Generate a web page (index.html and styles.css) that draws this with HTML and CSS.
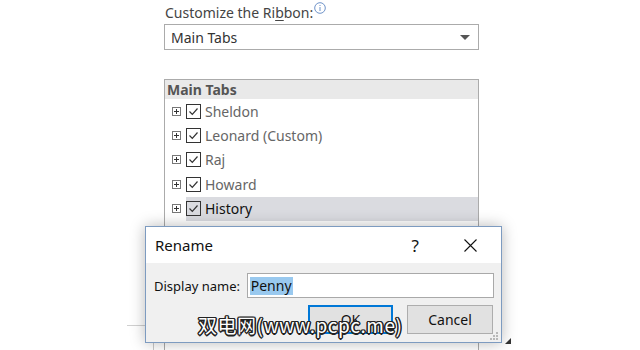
FILE: index.html
```html
<!DOCTYPE html>
<html lang="en">
<head>
    <meta charset="UTF-8">
    <title>Customize the Ribbon</title>
    <link rel="stylesheet" href="styles.css">
</head>
<body>
    <div class="screen">
        <div class="panel">
            <div class="field-label">
                Customize the Ri<u>b</u>bon:<svg class="info-icon" width="12" height="12" viewBox="0 0 12 12"><circle cx="6" cy="6" r="5.3" fill="none" stroke="#6f93c9" stroke-width="1"/><rect x="5.5" y="5" width="1" height="4" fill="#6f93c9"/><rect x="5.5" y="3" width="1" height="1" fill="#6f93c9"/></svg>
            </div>
            <div class="dropdown">
                <span>Main Tabs</span>
                <span class="arrow"></span>
            </div>

            <div class="listbox">
                <div class="list-head">Main Tabs</div>
                <div class="row"><span class="expander"></span><span class="check"></span><span class="row-label">Sheldon</span></div>
                <div class="row"><span class="expander"></span><span class="check"></span><span class="row-label">Leonard (Custom)</span></div>
                <div class="row"><span class="expander"></span><span class="check"></span><span class="row-label">Raj</span></div>
                <div class="row"><span class="expander"></span><span class="check"></span><span class="row-label">Howard</span></div>
                <div class="row selected"><span class="expander"></span><span class="check"></span><span class="row-label">History</span></div>
                <div class="row"><span class="expander"></span><span class="check"></span><span class="row-label">Penny</span></div>
            </div>
        </div>

        <!-- bits of the options window behind the dialog -->
        <div class="back-rule"></div>
        <div class="back-edge"></div>
        <svg class="scroll-tip" width="6" height="6" viewBox="0 0 6 6"><polygon points="6,0 6,6 0,6" fill="#333"/></svg>

        <div class="dialog">
            <div class="dialog-title">
                <span class="dialog-name">Rename</span>
                <span class="help">?</span>
                <svg class="close" width="13" height="13" viewBox="0 0 13 13"><path d="M0.5 0.5 L12.5 12.5 M12.5 0.5 L0.5 12.5" stroke="#111" stroke-width="1.1"/></svg>
            </div>
            <div class="dialog-body">
                <div class="name-row">
                    <span class="name-label">Display name:</span>
                    <div class="name-input"><span class="selection">Penny</span></div>
                </div>
                <div class="button-row">
                    <button class="btn btn-ok">OK</button>
                    <button class="btn">Cancel</button>
                </div>
            </div>
            <svg class="grip" width="10" height="10" viewBox="0 0 10 10">
                <rect x="7" y="1" width="2" height="2" fill="#b8b8b8"/>
                <rect x="4" y="4" width="2" height="2" fill="#b8b8b8"/>
                <rect x="7" y="4" width="2" height="2" fill="#b8b8b8"/>
                <rect x="1" y="7" width="2" height="2" fill="#b8b8b8"/>
                <rect x="4" y="7" width="2" height="2" fill="#b8b8b8"/>
                <rect x="7" y="7" width="2" height="2" fill="#b8b8b8"/>
            </svg>
        </div>

        <div class="watermark">双电网(www.pcpc.me)</div>
    </div>
</body>
</html>
```

FILE: styles.css
```css
body {
    margin: 0;
    background-color: white;
    font-family: "Noto Sans", "Open Sans", sans-serif;
}
.screen {
    position: relative;
    width: 640px;
    height: 350px;
    overflow: hidden;
    background-color: white;
}
.panel {
    padding-left: 164px;
    padding-top: 2px;
    width: 315px;
}
.field-label {
    height: 22px;
    font-size: 14px;
    line-height: 18px;
    color: #444;
    padding-left: 1px;
}
.field-label u {
    text-underline-offset: 2px;
}
.info-icon {
    vertical-align: 4px;
    margin-left: 1px;
}
.dropdown {
    height: 24px;
    border: 1px solid #ababab;
    display: flex;
    align-items: center;
    justify-content: space-between;
    padding: 0 6px;
    font-size: 14px;
    color: #333;
}
.arrow {
    width: 0;
    height: 0;
    border-left: 5px solid transparent;
    border-right: 5px solid transparent;
    border-top: 5px solid #555;
    margin-right: 2px;
}
.listbox {
    margin-top: 29px;
    height: 320px;
    border: 1px solid #ababab;
}
.list-head {
    height: 19px;
    line-height: 19px;
    background-color: #e9e9e9;
    font-size: 14px;
    font-weight: bold;
    color: #555;
    padding-left: 2px;
}
.row {
    height: 24.4px;
    display: flex;
    align-items: center;
    font-size: 14px;
    color: #666;
}
.expander {
    width: 7px;
    height: 7px;
    border: 1px solid #777;
    margin-left: 7px;
    margin-right: 5px;
    background:
        linear-gradient(#333, #333) center / 5px 1px no-repeat,
        linear-gradient(#333, #333) center / 1px 5px no-repeat;
}
.check {
    width: 13px;
    height: 13px;
    border: 1px solid #333;
    margin-right: 4px;
    background: url("data:image/svg+xml;utf8,<svg xmlns='http://www.w3.org/2000/svg' width='13' height='13'><polyline points='2.5,6.5 5.3,9.3 10.5,3.5' fill='none' stroke='%23333' stroke-width='1.2'/></svg>") center no-repeat;
}
.row.selected {
    color: #111;
    background: linear-gradient(to right, transparent 21px, #dadbe0 21px);
}
.back-rule {
    position: absolute;
    left: 127px;
    top: 325px;
    width: 30px;
    border-top: 1px solid #d0d0d0;
}
.back-edge {
    position: absolute;
    left: 153px;
    top: 325px;
    height: 30px;
    border-left: 1px solid #c8c8c8;
}
.scroll-tip {
    position: absolute;
    left: 505px;
    top: 338px;
}
.dialog {
    position: absolute;
    left: 145px;
    top: 226px;
    width: 355px;
    height: 115px;
    border: 1px solid #7d9bc0;
    background-color: #f0f0f0;
    box-shadow: 0 0 14px rgba(0,0,0,0.28);
}
.dialog-title {
    height: 36px;
    background-color: white;
    display: flex;
    align-items: center;
    font-size: 15px;
    color: #111;
}
.dialog-name {
    padding-left: 9px;
    flex: 1;
}
.help {
    font-size: 17px;
    margin-right: 45px;
}
.close {
    margin-right: 24px;
}
.dialog-body {
    padding: 10px 7px 0 8px;
}
.name-row {
    display: flex;
    align-items: center;
    font-size: 13px;
    color: #111;
}
.name-label {
    width: 93px;
}
.name-input {
    width: 244px;
    height: 23px;
    border: 1px solid #a9a9a9;
    background-color: white;
    display: flex;
    align-items: center;
    padding-left: 2px;
    font-size: 14px;
}
.selection {
    background-color: #99c9ef;
    color: #111;
    line-height: 18px;
    padding: 0 1px;
}
.button-row {
    display: flex;
    gap: 14px;
    margin-top: 7px;
    padding-left: 154px;
}
.btn {
    width: 86px;
    height: 29px;
    background-color: #e1e1e1;
    border: 1px solid #adadad;
    font-family: "Noto Sans", "Open Sans", sans-serif;
    font-size: 14px;
    color: #111;
    padding: 0;
}
.btn-ok {
    width: 85px;
    border: 2px solid #0078d7;
}
.grip {
    position: absolute;
    right: 2px;
    bottom: 1px;
}
.watermark {
    position: absolute;
    left: 198px;
    top: 311px;
    font-family: "Noto Sans CJK SC", "Liberation Sans", sans-serif;
    font-size: 19px;
    letter-spacing: 0.5px;
    color: white;
    text-shadow:
        -1px -1px 0 #222, 1px -1px 0 #222,
        -1px 1px 0 #222, 1px 1px 0 #222,
        0 -1.5px 0 #222, 0 1.5px 0 #222,
        -1.5px 0 0 #222, 1.5px 0 0 #222;
}
```
